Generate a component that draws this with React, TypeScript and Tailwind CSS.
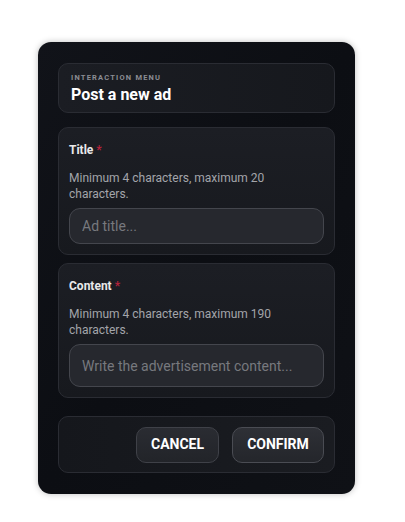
import { useState } from 'react';

const font = { fontFamily: 'Roboto, "Noto Sans", sans-serif' };

const Field = ({
  label,
  hint,
  placeholder,
  value,
  onChange,
  tall,
  className,
}: {
  label: string;
  hint: string;
  placeholder: string;
  value: string;
  onChange: (v: string) => void;
  tall?: boolean;
  className?: string;
}) => (
  <div
    className={`rounded-[10px] border border-[#2a2c33] bg-gradient-to-b from-[#1c1e24] to-[#17191e] px-[10px] pt-[15px] pb-[10px] ${className ?? ''}`}
  >
    <div className="text-[12px] font-bold leading-[14px] text-[#e9e9ea]">
      {label} <span className="text-[#b3223b]">*</span>
    </div>
    <p className="mt-[13px] text-[12px] leading-[16px] text-[#a3a5aa]">{hint}</p>
    <input
      value={value}
      onChange={(e) => onChange(e.target.value)}
      placeholder={placeholder}
      className={`mt-[6px] block w-full rounded-[11px] border border-[#44464d] bg-[#26282e] px-[12px] text-[14px] text-[#e9e9ea] placeholder:text-[#77797e] outline-none ${tall ? 'h-[43px]' : 'h-[36px]'}`}
      style={font}
    />
  </div>
);

export default function App() {
  const [title, setTitle] = useState('');
  const [content, setContent] = useState('');

  return (
    <div className="min-h-[522px] w-full bg-white pt-[42px] pl-[38px]" style={font}>
      <div className="w-[317px] rounded-[13px] bg-gradient-to-br from-[#111319] via-[#0c0e13] to-[#0f1116] px-[20px] pt-[21px] pb-[21px] shadow-[0_0_6px_rgba(0,0,0,0.25)]">
        {/* header */}
        <div className="h-[50px] rounded-[10px] border border-[#2a2c33] bg-gradient-to-r from-[#1b1d23] to-[#16181d] px-[12px] pt-[9px]">
          <div className="text-[7.5px] font-bold leading-[10px] tracking-[0.16em] text-[#8b8d93]">
            INTERACTION MENU
          </div>
          <div className="mt-[1px] text-[16px] font-bold leading-[21px] text-white">Post a new ad</div>
        </div>

        <Field
          className="mt-[14px]"
          label="Title"
          hint="Minimum 4 characters, maximum 20 characters."
          placeholder="Ad title..."
          value={title}
          onChange={setTitle}
        />

        <Field
          className="mt-[8px]"
          label="Content"
          hint="Minimum 4 characters, maximum 190 characters."
          placeholder="Write the advertisement content..."
          value={content}
          onChange={setContent}
          tall
        />

        {/* actions */}
        <div className="mt-[18px] flex h-[57px] items-center justify-end gap-[13px] rounded-[10px] border border-[#2a2c33] bg-gradient-to-r from-[#15171c] to-[#1a1c21] pr-[10px]">
          <button className="h-[36px] w-[83px] rounded-[10px] border border-[#3f4148] bg-gradient-to-b from-[#2a2c32] to-[#222429] text-[14px] font-bold text-white">
            CANCEL
          </button>
          <button className="h-[36px] w-[92px] rounded-[10px] border border-[#4a4c53] bg-gradient-to-b from-[#2e3036] to-[#24262b] text-[14px] font-bold text-white">
            CONFIRM
          </button>
        </div>
      </div>
    </div>
  );
}
